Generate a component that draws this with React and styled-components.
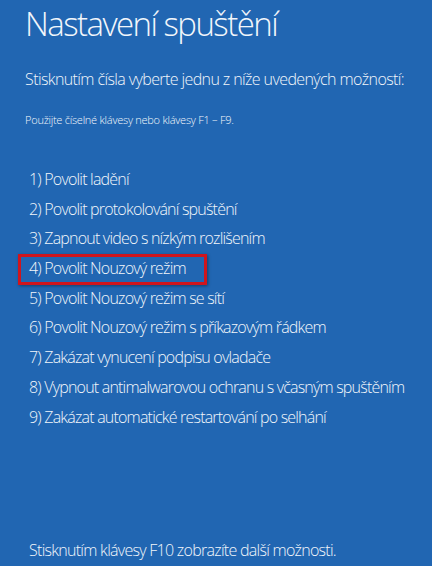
import styled, { createGlobalStyle } from 'styled-components';

const GlobalStyle = createGlobalStyle`
  html, body {
    margin: 0;
    padding: 0;
    background: #2166b2;
  }
  body {
    font-family: 'Open Sans', 'Noto Sans', sans-serif;
    color: #f2f6fb;
  }
`;

const Screen = styled.div`
  width: 432px;
  height: 566px;
  box-sizing: border-box;
  padding: 0 0 0 25px;
  display: flex;
  flex-direction: column;
  background: #2166b2;
  overflow: hidden;
`;

const Title = styled.h1`
  margin: 0;
  padding-top: 2px;
  font-size: 33px;
  line-height: 44px;
  font-weight: 300;
  letter-spacing: -1.55px;
`;

const Prompt = styled.p`
  margin: 22px 0 0;
  font-size: 16px;
  line-height: 22px;
  font-weight: 300;
  letter-spacing: -0.6px;
  white-space: nowrap;
`;

const Hint = styled.p`
  margin: 22px 0 0;
  font-size: 11px;
  line-height: 15px;
  font-weight: 300;
  letter-spacing: -0.25px;
`;

const OptionList = styled.ol`
  list-style: none;
  margin: 41px 0 0;
  padding: 0 0 0 4px;
  display: flex;
  flex-direction: column;
  gap: 6.7px;
`;

const Option = styled.li`
  font-size: 16px;
  line-height: 23px;
  font-weight: 300;
  letter-spacing: -0.8px;
  white-space: nowrap;
`;

const Label = styled.span`
  display: inline-block;
  margin: ${p => (p.$selected ? '-3px 0 -5px -11px' : '0')};
  padding: ${p => (p.$selected ? '0 18px 2px 8px' : '0')};
  border: ${p => (p.$selected ? '3px solid #cf151d' : 'none')};
  box-shadow: ${p => (p.$selected ? '1px 1px 3px rgba(0, 0, 0, 0.4)' : 'none')};
`;

const Footer = styled.p`
  margin: auto 0 5px 4px;
  font-size: 16px;
  line-height: 22px;
  font-weight: 300;
  letter-spacing: -0.72px;
`;

const options = [
  'Povolit ladění',
  'Povolit protokolování spuštění',
  'Zapnout video s nízkým rozlišením',
  'Povolit Nouzový režim',
  'Povolit Nouzový režim se sítí',
  'Povolit Nouzový režim s příkazovým řádkem',
  'Zakázat vynucení podpisu ovladače',
  'Vypnout antimalwarovou ochranu s včasným spuštěním',
  'Zakázat automatické restartování po selhání',
];

export default function App() {
  return (
    <>
      <GlobalStyle />
      <Screen>
        <Title>Nastavení spuštění</Title>
        <Prompt>Stisknutím čísla vyberte jednu z níže uvedených možností:</Prompt>
        <Hint>Použijte číselné klávesy nebo klávesy F1 – F9.</Hint>
        <OptionList>
          {options.map((text, i) => (
            <Option key={i}>
              <Label $selected={i === 3}>
                {i + 1}) {text}
              </Label>
            </Option>
          ))}
        </OptionList>
        <Footer>Stisknutím klávesy F10 zobrazíte další možnosti.</Footer>
      </Screen>
    </>
  );
}
